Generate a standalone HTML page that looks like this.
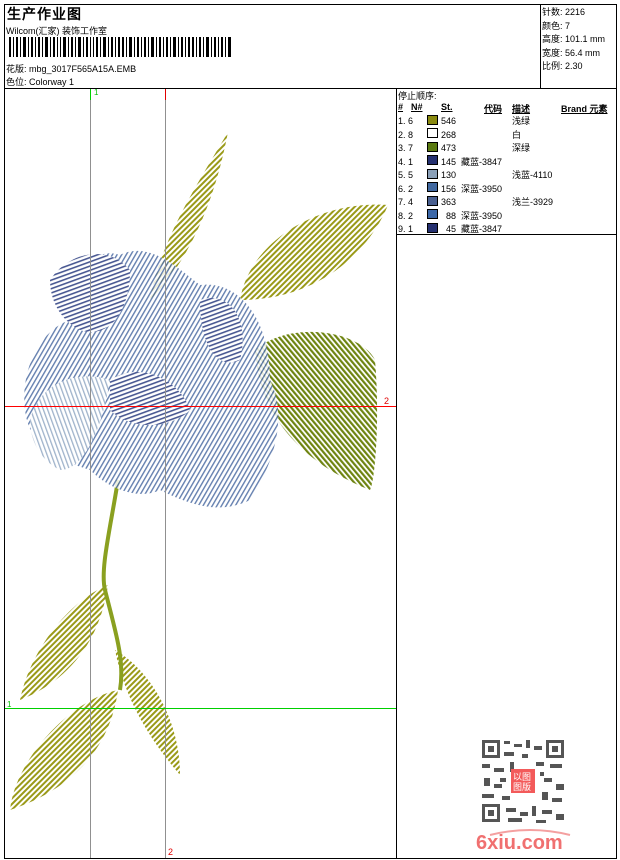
<!DOCTYPE html>
<html><head><meta charset="utf-8"><style>
*{margin:0;padding:0;box-sizing:border-box}
body{width:620px;height:860px;background:#fff;font-family:"Liberation Sans","WenQuanYi Zen Hei",sans-serif;font-size:9px;color:#000;position:relative;overflow:hidden}
.a{position:absolute;white-space:nowrap}
.ln{position:absolute;background:#000}
.sw{position:absolute;width:11px;height:10px;border:1px solid #000}
</style></head><body>
<div class="ln" style="left:4px;top:4px;width:613px;height:1px"></div>
<div class="ln" style="left:4px;top:858px;width:613px;height:1px"></div>
<div class="ln" style="left:4px;top:4px;width:1px;height:855px"></div>
<div class="ln" style="left:616px;top:4px;width:1px;height:855px"></div>
<div class="ln" style="left:4px;top:88px;width:613px;height:1px"></div>
<div class="ln" style="left:396px;top:88px;width:1px;height:771px"></div>
<div class="ln" style="left:540px;top:4px;width:1px;height:84px"></div>
<div class="ln" style="left:396px;top:234px;width:221px;height:1px"></div>

<div class="a" style="left:7px;top:4px;font-size:14px;font-weight:bold;letter-spacing:1px">生产作业图</div>
<div class="a" style="left:6px;top:24px">Wilcom(汇家) 装饰工作室</div>
<svg class="a" style="left:9px;top:37px" width="225" height="20">
<g fill="#000">
<rect x="0" y="0" width="2" height="20"/><rect x="4" y="0" width="1" height="20"/><rect x="7" y="0" width="2" height="20"/><rect x="11" y="0" width="1" height="20"/><rect x="14" y="0" width="3" height="20"/><rect x="19" y="0" width="1" height="20"/><rect x="22" y="0" width="2" height="20"/><rect x="26" y="0" width="1" height="20"/><rect x="29" y="0" width="2" height="20"/><rect x="33" y="0" width="1" height="20"/><rect x="36" y="0" width="3" height="20"/><rect x="41" y="0" width="1" height="20"/><rect x="44" y="0" width="2" height="20"/><rect x="48" y="0" width="1" height="20"/><rect x="51" y="0" width="1" height="20"/><rect x="54" y="0" width="3" height="20"/><rect x="59" y="0" width="1" height="20"/><rect x="62" y="0" width="2" height="20"/><rect x="66" y="0" width="1" height="20"/><rect x="69" y="0" width="3" height="20"/><rect x="74" y="0" width="1" height="20"/><rect x="77" y="0" width="2" height="20"/><rect x="81" y="0" width="1" height="20"/><rect x="84" y="0" width="1" height="20"/><rect x="87" y="0" width="2" height="20"/><rect x="91" y="0" width="1" height="20"/><rect x="94" y="0" width="3" height="20"/><rect x="99" y="0" width="1" height="20"/><rect x="102" y="0" width="2" height="20"/><rect x="106" y="0" width="1" height="20"/><rect x="109" y="0" width="2" height="20"/><rect x="113" y="0" width="2" height="20"/><rect x="117" y="0" width="1" height="20"/><rect x="120" y="0" width="3" height="20"/><rect x="125" y="0" width="1" height="20"/><rect x="128" y="0" width="2" height="20"/><rect x="132" y="0" width="1" height="20"/><rect x="135" y="0" width="2" height="20"/><rect x="139" y="0" width="1" height="20"/><rect x="142" y="0" width="3" height="20"/><rect x="147" y="0" width="1" height="20"/><rect x="150" y="0" width="2" height="20"/><rect x="154" y="0" width="1" height="20"/><rect x="157" y="0" width="2" height="20"/><rect x="161" y="0" width="1" height="20"/><rect x="164" y="0" width="3" height="20"/><rect x="169" y="0" width="1" height="20"/><rect x="172" y="0" width="2" height="20"/><rect x="176" y="0" width="1" height="20"/><rect x="179" y="0" width="2" height="20"/><rect x="183" y="0" width="2" height="20"/><rect x="187" y="0" width="1" height="20"/><rect x="190" y="0" width="2" height="20"/><rect x="194" y="0" width="1" height="20"/><rect x="197" y="0" width="3" height="20"/><rect x="202" y="0" width="1" height="20"/><rect x="205" y="0" width="2" height="20"/><rect x="209" y="0" width="1" height="20"/><rect x="212" y="0" width="2" height="20"/><rect x="216" y="0" width="1" height="20"/><rect x="219" y="0" width="3" height="20"/>
</g></svg>
<div class="a" style="left:6px;top:62px">花版: mbg_3017F565A15A.EMB</div>
<div class="a" style="left:6px;top:75px">色位: Colorway 1</div>

<div class="a" style="left:542px;top:6px;line-height:13.5px">针数: 2216<br>颜色: 7<br>高度: 101.1 mm<br>宽度: 56.4 mm<br>比例: 2.30</div>

<div class="a" style="left:398px;top:89px">停止顺序:</div>
<div class="a" style="left:398px;top:102px;font-weight:bold;text-decoration:underline">#</div>
<div class="a" style="left:411px;top:102px;font-weight:bold;text-decoration:underline">N#</div>
<div class="a" style="left:441px;top:102px;font-weight:bold;text-decoration:underline">St.</div>
<div class="a" style="left:484px;top:102px;font-weight:bold;text-decoration:underline">代码</div>
<div class="a" style="left:512px;top:102px;font-weight:bold;text-decoration:underline">描述</div>
<div class="a" style="left:561px;top:102px;font-weight:bold;text-decoration:underline">Brand 元素</div>

<div class="a" style="left:398px;top:115px;line-height:13.5px">1. 6<br>2. 8<br>3. 7<br>4. 1<br>5. 5<br>6. 2<br>7. 4<br>8. 2<br>9. 1</div>
<div class="sw" style="left:427px;top:115px;background:#8a8a10"></div>
<div class="sw" style="left:427px;top:128px;background:#fff"></div>
<div class="sw" style="left:427px;top:142px;background:#5a7a10"></div>
<div class="sw" style="left:427px;top:155px;background:#253070"></div>
<div class="sw" style="left:427px;top:169px;background:#8aa0b8"></div>
<div class="sw" style="left:427px;top:182px;background:#4068a0"></div>
<div class="sw" style="left:427px;top:196px;background:#4a6090"></div>
<div class="sw" style="left:427px;top:209px;background:#3c68a8"></div>
<div class="sw" style="left:427px;top:223px;background:#253070"></div>
<div class="a" style="left:440px;top:115px;line-height:13.5px;text-align:right;width:16px">546<br>268<br>473<br>145<br>130<br>156<br>363<br>88<br>45</div>
<div class="a" style="left:461px;top:115px;line-height:13.5px"><br><br><br>藏蓝-3847<br><br>深蓝-3950<br><br>深蓝-3950<br>藏蓝-3847</div>
<div class="a" style="left:512px;top:115px;line-height:13.5px">浅绿<br>白<br>深绿<br><br>浅蓝-4110<br><br>浅兰-3929</div>

<svg class="a" style="left:0;top:0" width="396" height="860">
<defs>
<pattern id="pb" width="4" height="4" patternUnits="userSpaceOnUse" patternTransform="rotate(30)"><rect width="4" height="4" fill="#fff"/><rect width="1.4" height="4" fill="#4a6aa2"/></pattern>
<pattern id="pl" width="4" height="4" patternUnits="userSpaceOnUse" patternTransform="rotate(-20)"><rect width="4" height="4" fill="#fff"/><rect width="1.3" height="4" fill="#8fa6c2"/></pattern>
<pattern id="pd" width="4" height="4" patternUnits="userSpaceOnUse" patternTransform="rotate(70)"><rect width="4" height="4" fill="#fff"/><rect width="1.6" height="4" fill="#2a3c80"/></pattern>
<pattern id="py" width="4" height="4" patternUnits="userSpaceOnUse" patternTransform="rotate(45)"><rect width="4" height="4" fill="#fff"/><rect width="2" height="4" fill="#9a9a18"/></pattern>
<pattern id="pg" width="4" height="4" patternUnits="userSpaceOnUse" patternTransform="rotate(-40)"><rect width="4" height="4" fill="#fff"/><rect width="2.2" height="4" fill="#6e8410"/></pattern>
</defs>
<path d="M240,300 C250,240 320,200 388,205 C370,250 320,300 240,300Z" fill="url(#py)"/>
<path d="M255,350 C290,320 360,330 375,360 C380,420 375,480 370,490 C320,470 260,430 255,350Z" fill="url(#pg)"/>
<path d="M150,300 C160,240 200,180 228,132 C215,200 190,260 150,300Z" fill="url(#py)"/>
<path d="M20,700 C30,650 70,600 108,585 C100,640 70,680 20,700Z" fill="url(#py)"/>
<path d="M10,810 C15,760 70,700 118,690 C110,750 70,790 10,810Z" fill="url(#py)"/>
<path d="M115,650 C150,670 180,720 180,775 C150,740 125,700 115,650Z" fill="url(#py)"/>
<path d="M118,480 C110,530 100,570 105,590 C115,630 125,660 120,690" fill="none" stroke="#8aa020" stroke-width="4"/>
<g opacity="0.85">
<path d="M25,410 C20,370 40,330 70,320 C70,280 90,245 120,255 C150,240 180,270 200,285 C240,280 270,320 270,380 C290,420 270,470 250,500 C220,515 190,505 160,490 C140,500 110,490 90,470 C60,460 30,450 25,410Z" fill="url(#pb)"/>
<path d="M30,420 C40,380 80,370 110,380 C100,440 80,470 60,470 C40,460 30,440 30,420Z" fill="url(#pl)"/>
<path d="M50,280 C70,250 110,245 130,270 C130,310 110,340 80,330 C60,320 50,300 50,280Z" fill="url(#pd)"/>
<path d="M110,380 C140,360 180,380 190,410 C170,430 130,430 110,410Z" fill="url(#pd)"/>
<path d="M200,300 C230,290 250,320 240,360 C220,370 200,350 200,300Z" fill="url(#pd)"/>
</g>
<line x1="90.5" y1="89" x2="90.5" y2="858" stroke="#909090"/>
<line x1="165.5" y1="89" x2="165.5" y2="858" stroke="#909090"/>
<line x1="90.5" y1="89" x2="90.5" y2="100" stroke="#00d000"/>
<line x1="165.5" y1="89" x2="165.5" y2="100" stroke="#e00000"/>
<line x1="5" y1="406.5" x2="396" y2="406.5" stroke="#ff0000"/>
<line x1="5" y1="708.5" x2="396" y2="708.5" stroke="#00d000"/>
<text x="94" y="95" font-size="8" fill="#00c000" font-family="Liberation Sans">1</text>
<text x="384" y="404" font-size="9" fill="#e00000" font-family="Liberation Sans">2</text>
<text x="7" y="707" font-size="8" fill="#00c000" font-family="Liberation Sans">1</text>
<text x="168" y="855" font-size="9" fill="#e00000" font-family="Liberation Sans">2</text>
</svg>

<svg class="a" style="left:480px;top:738px" width="86" height="86">
<rect width="86" height="86" fill="#fff"/>
<g fill="#555">
<rect x="2" y="2" width="18" height="18"/><rect x="66" y="2" width="18" height="18"/><rect x="2" y="66" width="18" height="18"/>
</g>
<g fill="#fff"><rect x="5" y="5" width="12" height="12"/><rect x="69" y="5" width="12" height="12"/><rect x="5" y="69" width="12" height="12"/></g>
<g fill="#555"><rect x="8" y="8" width="6" height="6"/><rect x="72" y="8" width="6" height="6"/><rect x="8" y="72" width="6" height="6"/>
<rect x="24" y="3" width="6" height="3"/><rect x="34" y="6" width="8" height="3"/><rect x="46" y="2" width="4" height="8"/><rect x="54" y="8" width="8" height="4"/><rect x="24" y="14" width="10" height="4"/><rect x="42" y="16" width="6" height="4"/>
<rect x="2" y="26" width="8" height="4"/><rect x="14" y="30" width="10" height="4"/><rect x="30" y="24" width="4" height="10"/><rect x="56" y="24" width="8" height="4"/><rect x="70" y="26" width="12" height="4"/><rect x="4" y="40" width="6" height="8"/><rect x="14" y="46" width="8" height="4"/><rect x="64" y="40" width="8" height="4"/><rect x="76" y="46" width="8" height="6"/><rect x="2" y="56" width="12" height="4"/><rect x="22" y="58" width="8" height="4"/><rect x="62" y="54" width="6" height="8"/><rect x="72" y="60" width="10" height="4"/><rect x="26" y="70" width="10" height="4"/><rect x="40" y="74" width="8" height="4"/><rect x="52" y="68" width="4" height="10"/><rect x="62" y="72" width="10" height="4"/><rect x="76" y="76" width="8" height="6"/><rect x="28" y="80" width="14" height="4"/><rect x="56" y="82" width="10" height="3"/>
<rect x="20" y="40" width="6" height="4"/><rect x="60" y="34" width="4" height="4"/></g>
<rect x="31" y="31" width="24" height="24" fill="#f35a5a"/>
<text x="33" y="42" font-size="9" fill="#fff" font-family="WenQuanYi Zen Hei">以图</text>
<text x="33" y="52" font-size="9" fill="#fff" font-family="WenQuanYi Zen Hei">图版</text>
</svg>
<svg class="a" style="left:470px;top:825px" width="110" height="28">
<path d="M20,10 Q60,0 100,10" stroke="#f4a0a0" stroke-width="2" fill="none"/>
<text x="6" y="24" font-size="20" font-weight="bold" fill="#f07070" font-family="Liberation Sans">6xiu.com</text>
</svg>
</body></html>
